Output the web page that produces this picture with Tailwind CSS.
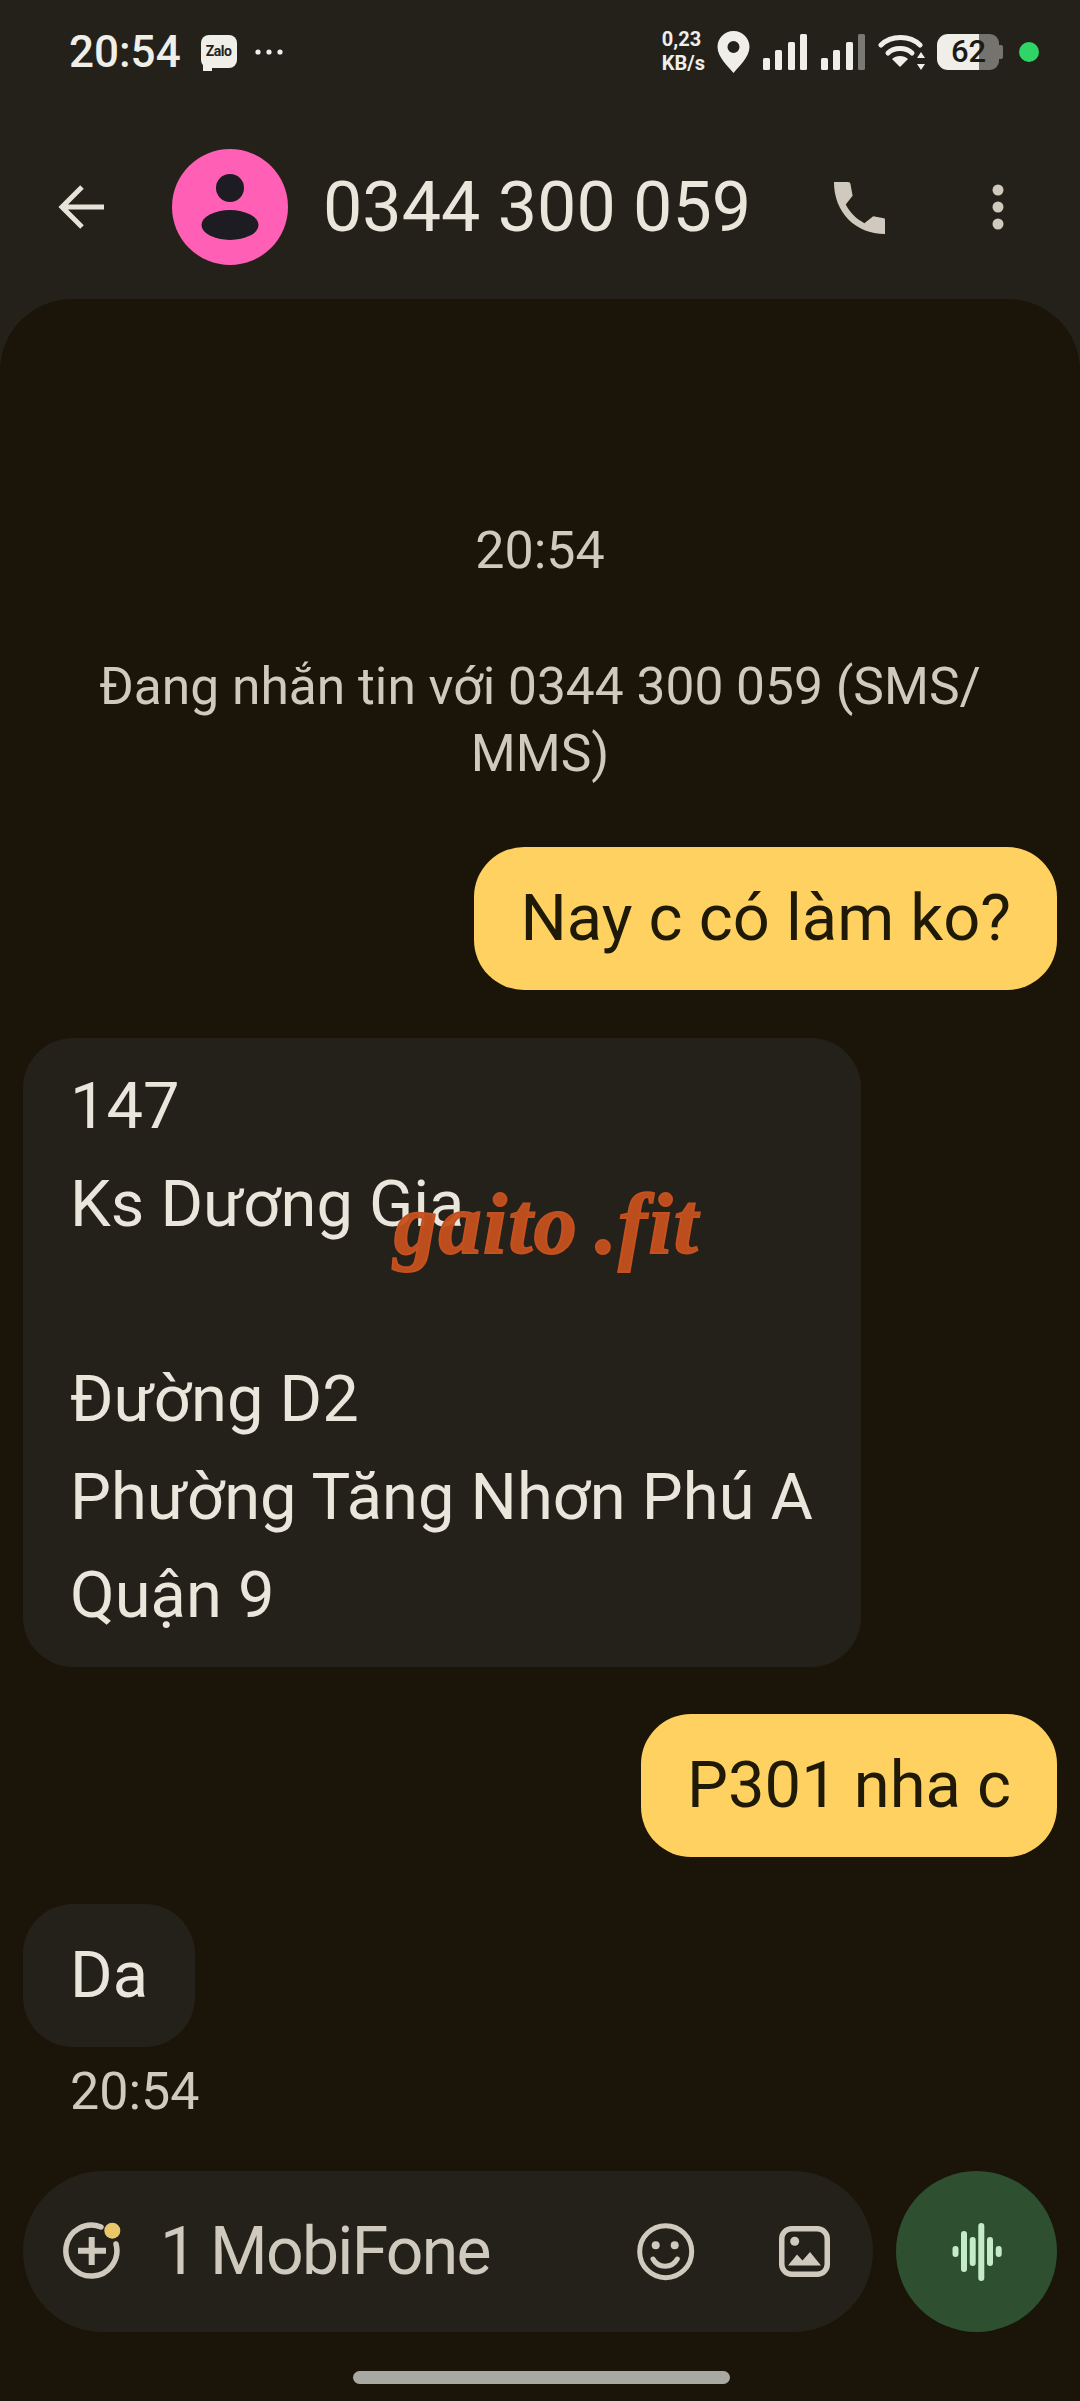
<!DOCTYPE html>
<html lang="en">
<head>
<meta charset="utf-8">
<title>Messages</title>
<script src="https://cdn.jsdelivr.net/npm/@tailwindcss/browser@4"></script>
</head>
<body>
<div class="relative w-[1080px] h-[2401px] overflow-hidden flex flex-col bg-[#24211b] font-['Roboto','Noto_Sans',sans-serif] text-[#ebe6dc]">

  <!-- status bar -->
  <div class="h-[104px] flex items-center justify-between pl-[69px] pr-[41px] shrink-0">
    <div class="flex items-center">
      <span class="text-[44px] leading-none font-medium text-[#efeee9]">20:54</span>
      <div class="relative ml-[20px] w-[36px] h-[33px] mt-[-2px] rounded-[8px] bg-[#efeee9] flex items-center justify-center text-[14px] font-bold tracking-[-0.5px] text-[#24211b]">Zalo
        <div class="absolute left-[2px] bottom-[-3px] w-[9px] h-[6px] bg-[#efeee9]"></div>
      </div>
      <svg class="ml-[17px]" width="30" height="8" viewBox="0 0 30 8"><circle cx="4" cy="4" r="2.600" fill="#efeee9"/><circle cx="15" cy="4" r="2.600" fill="#efeee9"/><circle cx="26" cy="4" r="2.600" fill="#efeee9"/></svg>
    </div>
    <div class="flex items-center">
      <div class="flex flex-col items-start text-[20px] leading-[24px] font-bold text-[#efeee9] mt-[-2px]"><span>0,23</span><span>KB/s</span></div>
      <svg class="ml-[12px]" width="33" height="42" viewBox="0 0 32 42"><path fill-rule="evenodd" fill="#efeee9" d="M16 0C7 0 0 7 0 16c0 10 11 20 16 26 5-6 16-16 16-26C32 7 25 0 16 0zm0 10a6 6 0 1 1 0 12 6 6 0 0 1 0-12z"/></svg>
      <svg class="ml-[13px]" width="44" height="36" viewBox="0 0 44 36"><rect x="0" y="24" width="7" height="12" rx="1.500" fill="#efeee9"/><rect x="12" y="16" width="7" height="20" rx="1.500" fill="#efeee9"/><rect x="25" y="8" width="7" height="28" rx="1.500" fill="#efeee9"/><rect x="37" y="0" width="7" height="36" rx="1.500" fill="#efeee9"/></svg>
      <svg class="ml-[14px]" width="44" height="36" viewBox="0 0 44 36"><rect x="0" y="24" width="7" height="12" rx="1.500" fill="#efeee9"/><rect x="12" y="16" width="7" height="20" rx="1.500" fill="#efeee9"/><rect x="25" y="8" width="7" height="28" rx="1.500" fill="#efeee9"/><rect x="37" y="0" width="7" height="36" rx="1.500" fill="#7a7872"/></svg>
      <svg class="ml-[13px]" width="48" height="36" viewBox="0 0 48 36"><path d="M3 11C13 1 32 1 42 11" fill="none" stroke="#efeee9" stroke-width="5" stroke-linecap="round"/><path d="M10 19c6-6 18-6 24 0" fill="none" stroke="#efeee9" stroke-width="5" stroke-linecap="round"/><path d="M14 25c4-4 12-4 16 0l-8 8z" fill="#efeee9"/><path d="M43 18l4 6h-8zM43 36l4-6h-8z" fill="#efeee9"/></svg>
      <div class="ml-[11px] relative w-[66px] h-[36px] flex">
        <div class="w-[42px] h-full rounded-l-[11px] bg-[#efeee9]"></div>
        <div class="w-[20px] h-full rounded-r-[9px] bg-[#75736e]"></div>
        <div class="w-[4px] h-[14px] mt-[11px] rounded-r-[2px] bg-[#75736e]"></div>
        <span class="absolute left-[14px] top-0 text-[31px] leading-[36px] font-medium text-[#1c1a15]">62</span>
      </div>
      <div class="ml-[16px] w-[20px] h-[20px] rounded-full bg-[#2fd566]"></div>
    </div>
  </div>

  <!-- app bar -->
  <div class="h-[195px] shrink-0 flex items-start pt-[45px] pr-[76px]">
    <svg class="ml-[58px] mt-[35px]" width="46" height="46" viewBox="0 0 46 46"><path d="M46 23H4M24 3L4 23l20 20" fill="none" stroke="#e8e3d9" stroke-width="5"/></svg>
    <div class="ml-[68px] w-[116px] h-[116px] rounded-full bg-[#ff5fb5] flex items-center justify-center">
      <svg width="58" height="66" viewBox="0 0 58 66"><circle cx="29" cy="14" r="14" fill="#1c1c22"/><ellipse cx="29" cy="51" rx="28.500" ry="15" fill="#1c1c22"/></svg>
    </div>
    <span class="ml-[35px] text-[70px] leading-[116px] text-[#ebe6dc]">0344 300 059</span>
    <svg class="ml-auto mt-[32px]" width="53" height="53" viewBox="0 0 54 54"><path fill="#cfcabd" d="M2 1h14c2 0 3 1 3 3l2 11-7 9c5 9 10 14 19 19l9-7 11 2c1 0 1 1 1 3v13c-30 0-52-22-52-53z"/></svg>
    <svg class="ml-[107px] mt-[35px]" width="12" height="46" viewBox="0 0 12 46"><circle cx="6" cy="6" r="5.500" fill="#cfcabd"/><circle cx="6" cy="23" r="5.500" fill="#cfcabd"/><circle cx="6" cy="40" r="5.500" fill="#cfcabd"/></svg>
  </div>

  <!-- conversation -->
  <div class="flex-1 rounded-t-[72px] bg-[#1a1508] flex flex-col px-[23px]">
    <div class="mt-[222px] text-center text-[52px] leading-[60px] text-[#cfcabd]">20:54</div>
    <div class="mt-[72px] text-center text-[51.500px] leading-[67px] text-[#cfcabd]">Đang nhắn tin với 0344 300 059 (SMS/<br>MMS)</div>

    <div class="mt-[60px] self-end h-[143px] rounded-[50px] bg-[#ffd160] px-[46px] flex items-center text-[65px] text-[#1f1a08]">Nay c có làm ko?</div>

    <div class="mt-[48px] self-start w-[838px] rounded-[50px] bg-[#24211b] pl-[47px] pt-[20px] pb-[23px] text-[65px] leading-[97.700px] text-[#ebe6dc]">147<br>Ks Dương Gia<br><br>Đường D2<br>Phường Tăng Nhơn Phú A<br>Quận 9</div>

    <div class="mt-[47px] self-end h-[143px] rounded-[50px] bg-[#ffd160] px-[46px] flex items-center text-[65px] text-[#1f1a08]">P301 nha c</div>

    <div class="mt-[47px] self-start h-[143px] rounded-[50px] bg-[#24211b] px-[47px] flex items-center text-[65px] text-[#ebe6dc]">Da</div>

    <div class="mt-[15px] pl-[47px] text-[52px] leading-[60px] text-[#cfcabd]">20:54</div>

    <!-- compose -->
    <div class="mt-[49px] flex justify-between">
      <div class="w-[850px] h-[161px] rounded-[80px] bg-[#24211b] flex items-center pl-[40px] text-[#cfcabd]">
        <svg width="60" height="60" viewBox="0 0 60 60"><path d="M38 5A25.500 25.500 0 1 0 53 22" fill="none" stroke="#cfcabd" stroke-width="5.500" stroke-linecap="round"/><path d="M28.700 15v28M15 28.700h28" stroke="#cfcabd" stroke-width="6"/><circle cx="49.300" cy="8.700" r="8" fill="#eac76a"/></svg>
        <span class="ml-[37px] w-[477px] text-[66px] leading-none tracking-[-1.700px]">1 MobiFone</span>
        <svg width="58" height="58" viewBox="0 0 58 58"><circle cx="28.700" cy="28.700" r="26" fill="none" stroke="#cfcabd" stroke-width="5"/><circle cx="18.700" cy="22.300" r="4" fill="#cfcabd"/><circle cx="37.700" cy="22.300" r="4" fill="#cfcabd"/><path d="M16 36c5 9.500 19 9.500 24.300 0" fill="none" stroke="#cfcabd" stroke-width="5" stroke-linecap="round"/></svg>
        <svg class="ml-[84px]" width="51" height="51" viewBox="0 0 51 51"><rect x="2.750" y="2.750" width="45.500" height="45.500" rx="10" fill="none" stroke="#cfcabd" stroke-width="5.500"/><circle cx="15.700" cy="15.300" r="4.500" fill="#cfcabd"/><path d="M9 39.500L18 28.500L23.500 34.500L31 26L42 39.500Z" fill="#cfcabd"/></svg>
      </div>
      <div class="w-[161px] h-[161px] rounded-full bg-[#2f4f31] flex items-center justify-center">
        <svg width="50" height="58" viewBox="0 0 50 58"><g stroke="#c3ecc7" stroke-width="6" stroke-linecap="round"><path d="M3.500 26v5M12 11v35M20.700 17v23M29.300 3v52M38 17v23M46.700 26v5"/></g></svg>
      </div>
    </div>

    <div class="mt-[39px] self-center w-[377px] h-[13px] rounded-full bg-[#a9a9a4] mr-[-3px]"></div>
  </div>

  <!-- watermark over the message -->
  <div class="absolute left-[394px] top-[1181px] font-['Liberation_Serif',serif] italic font-bold text-[86px] leading-none tracking-[1.500px] [word-spacing:-6px] [-webkit-text-stroke:2px_#c5511f] text-[#c5511f]/95">gaito .fit</div>
</div>
</body>
</html>
